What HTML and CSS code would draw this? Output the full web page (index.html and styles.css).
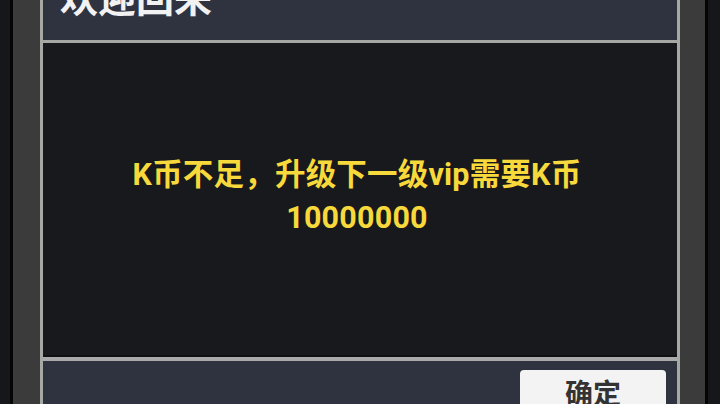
FILE: index.html
```html
<!DOCTYPE html>
<html lang="zh-CN">
<head>
<meta charset="utf-8">
<title>欢迎回来</title>
<link rel="stylesheet" href="styles.css">
</head>
<body>
<div class="screen">
  <div class="edge edge-left"></div>
  <div class="rule"></div>
  <div class="gutter gutter-left"></div>
  <div class="dialog">
    <div class="dialog-header">
      <h1 class="dialog-title">欢迎回来</h1>
    </div>
    <div class="dialog-body">
      <p class="message">K币不足，升级下一级vip需要K币<br>10000000</p>
    </div>
    <div class="dialog-footer">
      <button class="btn-ok" type="button">确定</button>
    </div>
  </div>
  <div class="gutter gutter-right"></div>
  <div class="rule"></div>
  <div class="edge edge-right"></div>
</div>
</body>
</html>
```

FILE: styles.css
```css
html, body {
  margin: 0;
  padding: 0;
}

body {
  width: 720px;
  height: 404px;
  overflow: hidden;
  background: #15171b;
  font-family: Roboto, "Noto Sans CJK SC", sans-serif;
}

.screen {
  display: flex;
  width: 720px;
  height: 404px;
}

.edge {
  background: #15171b;
}

.edge-left {
  width: 10px;
}

.edge-right {
  width: 12px;
}

.rule {
  width: 3px;
  background: #050506;
}

.gutter {
  background: #3b3b3b;
}

.gutter-left {
  width: 27px;
}

.gutter-right {
  width: 25px;
}

.dialog {
  flex: 1;
  display: flex;
  flex-direction: column;
  border-left: 3px solid #a6a8a6;
  border-right: 3px solid #a6a8a6;
  background: #2f3340;
}

.dialog-header {
  box-sizing: border-box;
  height: 43px;
  display: flex;
  align-items: flex-end;
  padding: 0 0 22px 17px;
  overflow: hidden;
  border-bottom: 3px solid #a6a8a6;
}

.dialog-title {
  margin: 0;
  font-size: 38px;
  line-height: 38px;
  font-weight: 700;
  color: #f2f2f2;
  white-space: nowrap;
}

.dialog-body {
  height: 314px;
  display: flex;
  align-items: center;
  justify-content: center;
  box-sizing: border-box;
  padding-bottom: 7px;
  background: #18191d;
  border-bottom: 2px solid #0f1013;
}

.message {
  margin: 0;
  text-align: center;
  font-size: 30.5px;
  line-height: 43px;
  font-weight: 700;
  letter-spacing: 0.2px;
  color: #f7d93b;
  padding-right: 6px;
}

.dialog-footer {
  flex: 1;
  display: flex;
  justify-content: flex-end;
  align-items: flex-start;
  padding: 9px 11px 0 0;
  border-top: 4px solid #a9aaa9;
  overflow: hidden;
}

.btn-ok {
  width: 146px;
  height: 52px;
  padding: 8px 0 0;
  box-sizing: border-box;
  display: flex;
  justify-content: center;
  align-items: flex-start;
  border: none;
  border-radius: 4px;
  background: #f3f3f3;
  color: #333333;
  font-family: Roboto, "Noto Sans CJK SC", sans-serif;
  font-size: 28px;
  line-height: 34px;
  font-weight: 700;
}
```
